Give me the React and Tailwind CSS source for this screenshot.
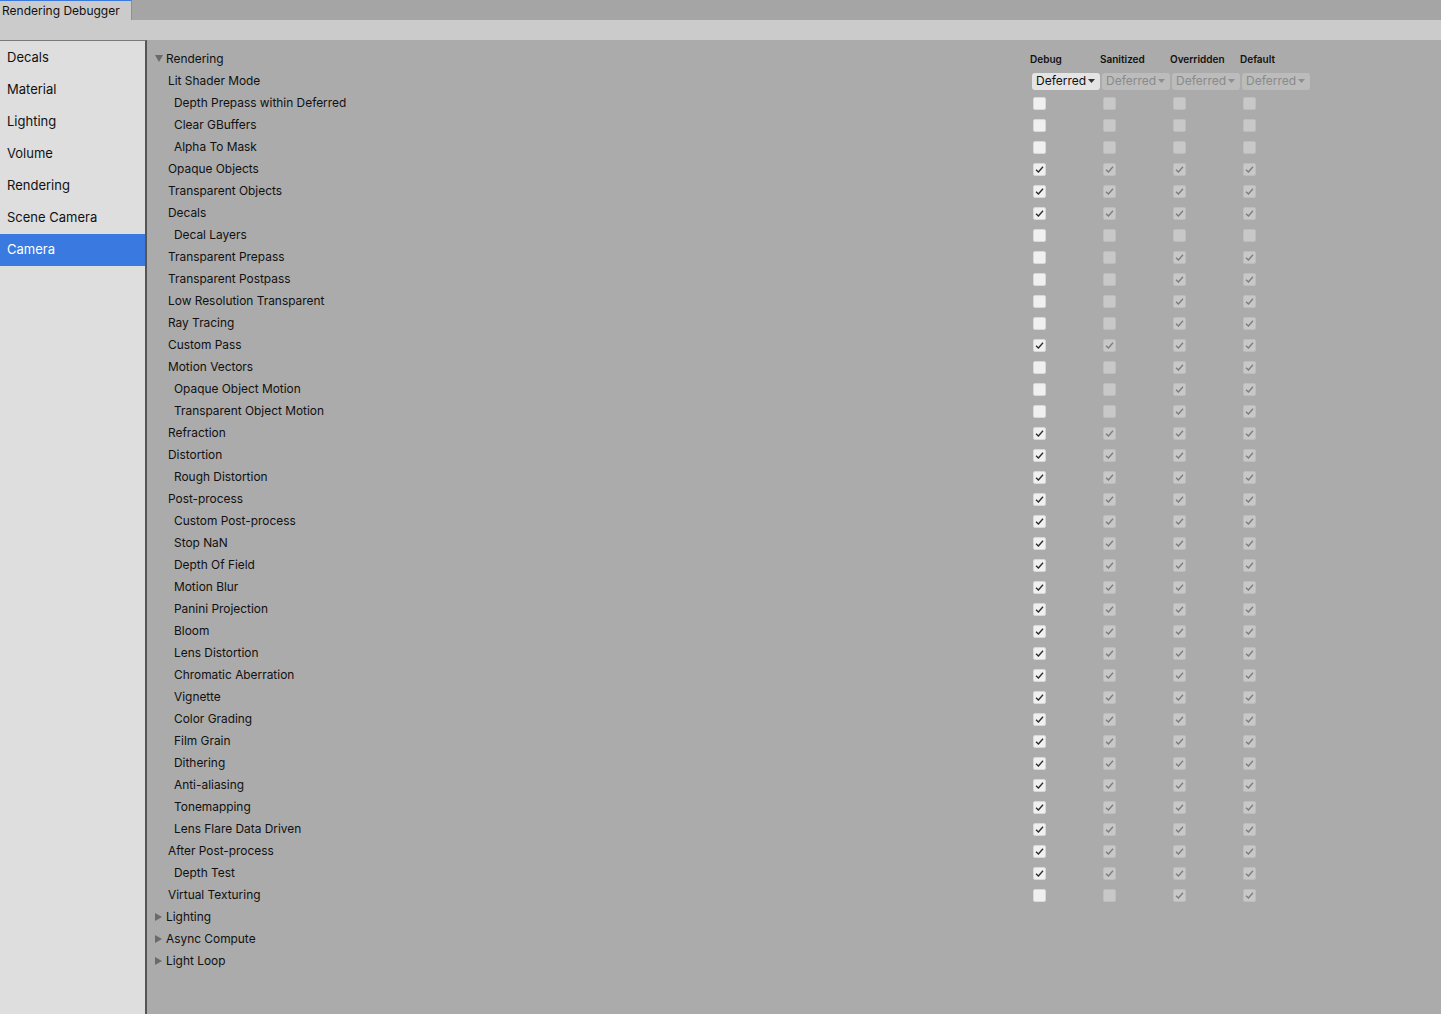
import React from "react";

const font = { fontFamily: "Inter, 'Noto Sans', sans-serif" };

const sideItems = ["Decals", "Material", "Lighting", "Volume", "Rendering", "Scene Camera", "Camera"];

// [label, indent level, debug, sanitized, overridden, default]
const rows = [
  ["Depth Prepass within Deferred", 2, 0, 0, 0, 0],
  ["Clear GBuffers", 2, 0, 0, 0, 0],
  ["Alpha To Mask", 2, 0, 0, 0, 0],
  ["Opaque Objects", 1, 1, 1, 1, 1],
  ["Transparent Objects", 1, 1, 1, 1, 1],
  ["Decals", 1, 1, 1, 1, 1],
  ["Decal Layers", 2, 0, 0, 0, 0],
  ["Transparent Prepass", 1, 0, 0, 1, 1],
  ["Transparent Postpass", 1, 0, 0, 1, 1],
  ["Low Resolution Transparent", 1, 0, 0, 1, 1],
  ["Ray Tracing", 1, 0, 0, 1, 1],
  ["Custom Pass", 1, 1, 1, 1, 1],
  ["Motion Vectors", 1, 0, 0, 1, 1],
  ["Opaque Object Motion", 2, 0, 0, 1, 1],
  ["Transparent Object Motion", 2, 0, 0, 1, 1],
  ["Refraction", 1, 1, 1, 1, 1],
  ["Distortion", 1, 1, 1, 1, 1],
  ["Rough Distortion", 2, 1, 1, 1, 1],
  ["Post-process", 1, 1, 1, 1, 1],
  ["Custom Post-process", 2, 1, 1, 1, 1],
  ["Stop NaN", 2, 1, 1, 1, 1],
  ["Depth Of Field", 2, 1, 1, 1, 1],
  ["Motion Blur", 2, 1, 1, 1, 1],
  ["Panini Projection", 2, 1, 1, 1, 1],
  ["Bloom", 2, 1, 1, 1, 1],
  ["Lens Distortion", 2, 1, 1, 1, 1],
  ["Chromatic Aberration", 2, 1, 1, 1, 1],
  ["Vignette", 2, 1, 1, 1, 1],
  ["Color Grading", 2, 1, 1, 1, 1],
  ["Film Grain", 2, 1, 1, 1, 1],
  ["Dithering", 2, 1, 1, 1, 1],
  ["Anti-aliasing", 2, 1, 1, 1, 1],
  ["Tonemapping", 2, 1, 1, 1, 1],
  ["Lens Flare Data Driven", 2, 1, 1, 1, 1],
  ["After Post-process", 1, 1, 1, 1, 1],
  ["Depth Test", 2, 1, 1, 1, 1],
  ["Virtual Texturing", 1, 0, 0, 1, 1],
];

function Check({ on, active }) {
  return (
    <div
      className={
        "ml-[3px] flex h-[13px] w-[13px] items-center justify-center rounded-[2px] " +
        (active ? "bg-[#f0f0f0] border border-[#d8d8d8]" : "bg-[#c8c8c8] border border-[#bdbdbd]")
      }
    >
      {on ? (
        <svg width="9" height="9" viewBox="0 0 9 9">
          <polyline
            points="1,4.8 3.4,7 8,1.8"
            fill="none"
            stroke={active ? "#2a2a2a" : "#7c7c7c"}
            strokeWidth="1.3"
          />
        </svg>
      ) : null}
    </div>
  );
}

function Dropdown({ active }) {
  return (
    <div
      className={
        "ml-[2px] flex h-[17px] w-[68px] items-center justify-between rounded-[3px] pl-[4px] pr-[5px] text-[12px] " +
        (active ? "bg-[#e4e4e4] text-[#111]" : "bg-[#bcbcbc] text-[#8a8a8a]")
      }
    >
      <span>Deferred</span>
      <svg width="7" height="4" viewBox="0 0 7 4">
        <polygon points="0,0 7,0 3.5,4" fill={active ? "#333" : "#8e8e8e"} />
      </svg>
    </div>
  );
}

function Arrow({ open }) {
  return (
    <div className="flex w-[11px] items-center">
      {open ? (
        <svg width="8" height="7" viewBox="0 0 8 7">
          <polygon points="0,0 8,0 4,7" fill="#6a6a6a" />
        </svg>
      ) : (
        <svg width="7" height="8" viewBox="0 0 7 8">
          <polygon points="0,0 7,4 0,8" fill="#6a6a6a" />
        </svg>
      )}
    </div>
  );
}

export default function App() {
  return (
    <div className="flex h-[1014px] w-[1441px] flex-col overflow-hidden bg-[#ababab] text-[#111]" style={font}>
      <div className="flex h-[20px] bg-[#a5a5a5]">
        <div className="h-[20px] w-[132px] border-t border-[#3a79e0] border-r border-r-[#8f8f8f] bg-[#cbcbcb] pl-[2px] pt-[2px] text-[12px] leading-[16px] text-[#111]">
          Rendering Debugger
        </div>
      </div>
      <div className="h-[20px] bg-[#cbcbcb]" />
      <div className="flex flex-1">
        <div className="w-[147px] border-t border-r-2 border-t-[#7a7a7a] border-r-[#555] bg-[#dedede] pt-[1px]">
          {sideItems.map((s) => (
            <div
              key={s}
              className={
                "flex h-[32px] items-center pl-[7px] text-[13px] " +
                (s === "Camera" ? "bg-[#3a79e0] text-white" : "text-[#111]")
              }
            >
              {s}
            </div>
          ))}
        </div>
        <div className="flex-1 pl-[8px] pt-[8px] text-[11.9px]">
          <div className="flex h-[22px] items-center">
            <div className="flex w-[875px] items-center">
              <Arrow open />
              <span>Rendering</span>
            </div>
            {["Debug", "Sanitized", "Overridden", "Default"].map((h) => (
              <div key={h} className="w-[70px] text-[10px] font-semibold text-[#111]">
                {h}
              </div>
            ))}
          </div>
          <div className="flex h-[22px] items-center">
            <div className="w-[875px] pl-[13px]">Lit Shader Mode</div>
            {[true, false, false, false].map((a, i) => (
              <div key={i} className="w-[70px]">
                <Dropdown active={a} />
              </div>
            ))}
          </div>
          {rows.map(([label, lvl, ...vals]) => (
            <div key={label} className="flex h-[22px] items-center">
              <div className={"w-[875px] " + (lvl === 2 ? "pl-[19px]" : "pl-[13px]")}>{label}</div>
              {vals.map((v, i) => (
                <div key={i} className="w-[70px]">
                  <Check on={v === 1} active={i === 0} />
                </div>
              ))}
            </div>
          ))}
          {["Lighting", "Async Compute", "Light Loop"].map((s) => (
            <div key={s} className="flex h-[22px] items-center">
              <Arrow />
              <span>{s}</span>
            </div>
          ))}
        </div>
      </div>
    </div>
  );
}
